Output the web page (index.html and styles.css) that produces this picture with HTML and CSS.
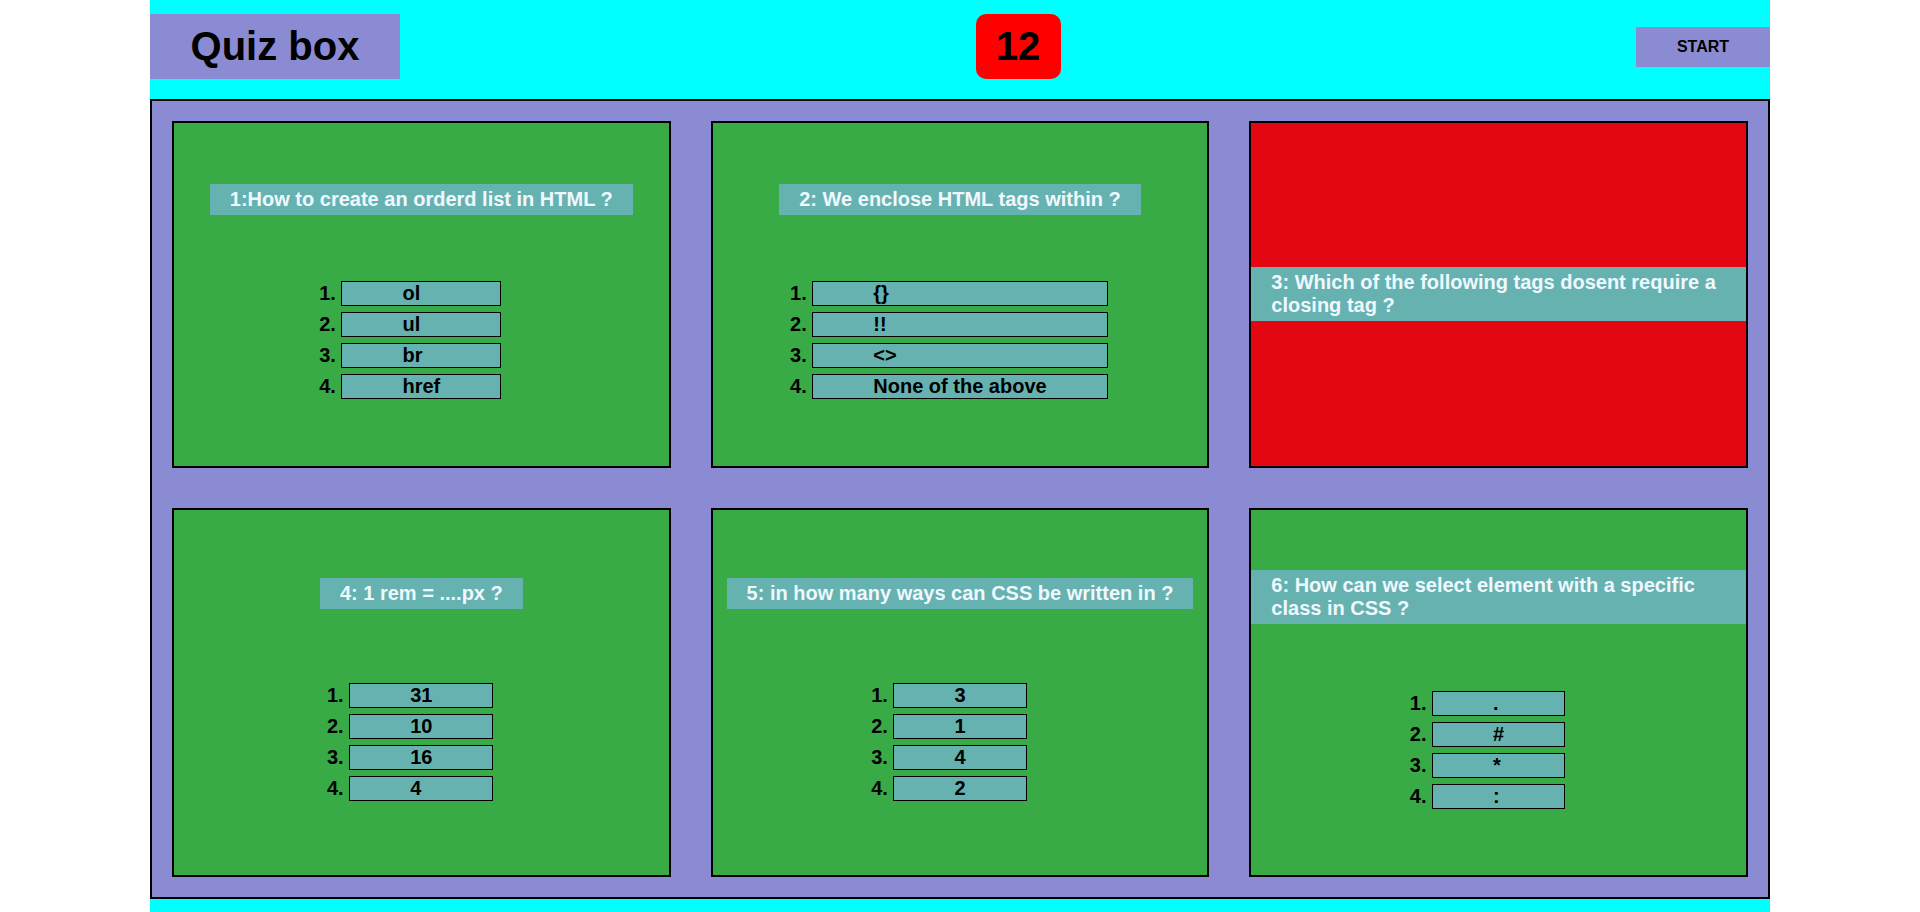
FILE: index.html
```html
<!DOCTYPE html>
<html lang="en">
<head>
<meta charset="utf-8">
<title>Quiz box</title>
<link rel="stylesheet" href="styles.css">
</head>
<body>
<div class="app">
  <header class="topbar">
    <h1 class="brand">Quiz box</h1>
    <div class="timer">12</div>
    <button class="start" type="button">START</button>
  </header>
  <main class="board">
    <section class="card">
      <p class="question">1:How to create an orderd list in HTML ?</p>
      <ol class="options">
        <li>ol</li>
        <li>ul</li>
        <li>br</li>
        <li>href</li>
      </ol>
    </section>
    <section class="card">
      <p class="question">2: We enclose HTML tags within ?</p>
      <ol class="options">
        <li>{}</li>
        <li>!!</li>
        <li>&lt;&gt;</li>
        <li>None of the above</li>
      </ol>
    </section>
    <section class="card card-wrong">
      <p class="question">3: Which of the following tags dosent require a closing tag ?</p>
    </section>
    <section class="card">
      <p class="question">4: 1 rem = ....px ?</p>
      <ol class="options">
        <li>31</li>
        <li>10</li>
        <li>16</li>
        <li>4</li>
      </ol>
    </section>
    <section class="card">
      <p class="question">5: in how many ways can CSS be written in ?</p>
      <ol class="options">
        <li>3</li>
        <li>1</li>
        <li>4</li>
        <li>2</li>
      </ol>
    </section>
    <section class="card">
      <p class="question">6: How can we select element with a specific class in CSS ?</p>
      <ol class="options">
        <li>.</li>
        <li>#</li>
        <li>*</li>
        <li>:</li>
      </ol>
    </section>
  </main>
</div>
</body>
</html>
```
FILE: styles.css
```css
html, body {
  margin: 0;
  padding: 0;
}

body {
  background: #ffffff;
  font-family: "Liberation Sans", Arial, sans-serif;
  color: #000;
}

.app {
  width: 1620px;
  margin: 0 auto;
  min-height: 100vh;
  background: #00ffff;
}

.topbar {
  display: flex;
  justify-content: space-between;
  align-items: center;
  padding: 14px 0 20px;
}

.brand {
  margin: 0;
  width: 250px;
  height: 65px;
  line-height: 65px;
  text-align: center;
  background: #8b8bd3;
  font-size: 40px;
  font-weight: bold;
  color: #000;
}

.timer {
  width: 85px;
  height: 65px;
  line-height: 65px;
  text-align: center;
  background: #ff0000;
  border-radius: 10px;
  font-size: 40px;
  font-weight: bold;
  color: #000;
}

.start {
  width: 134px;
  height: 40px;
  padding: 0;
  border: none;
  background: #8b8bd3;
  font-family: "Liberation Sans", Arial, sans-serif;
  font-size: 16px;
  font-weight: bold;
  color: #000;
}

.board {
  box-sizing: border-box;
  height: 800px;
  border: 2px solid #000;
  background: #8b8bd3;
  padding: 20px;
  display: grid;
  grid-template-columns: repeat(3, 1fr);
  gap: 40px;
}

.card {
  border: 2px solid #000;
  background: #38ab47;
  display: flex;
  flex-direction: column;
  align-items: center;
  justify-content: space-evenly;
}

.card-wrong {
  background: #e30613;
}

.question {
  margin: 0;
  padding: 4px 20px;
  background: #66b2b0;
  color: #f0f8ff;
  font-size: 20px;
  font-weight: bold;
}

.options {
  margin: 0;
  padding: 0;
  font-size: 20px;
  font-weight: bold;
}

.options li {
  margin: 6px 0;
  padding: 0 60px;
  border: 1px solid #000;
  background: #66b2b0;
}
```
